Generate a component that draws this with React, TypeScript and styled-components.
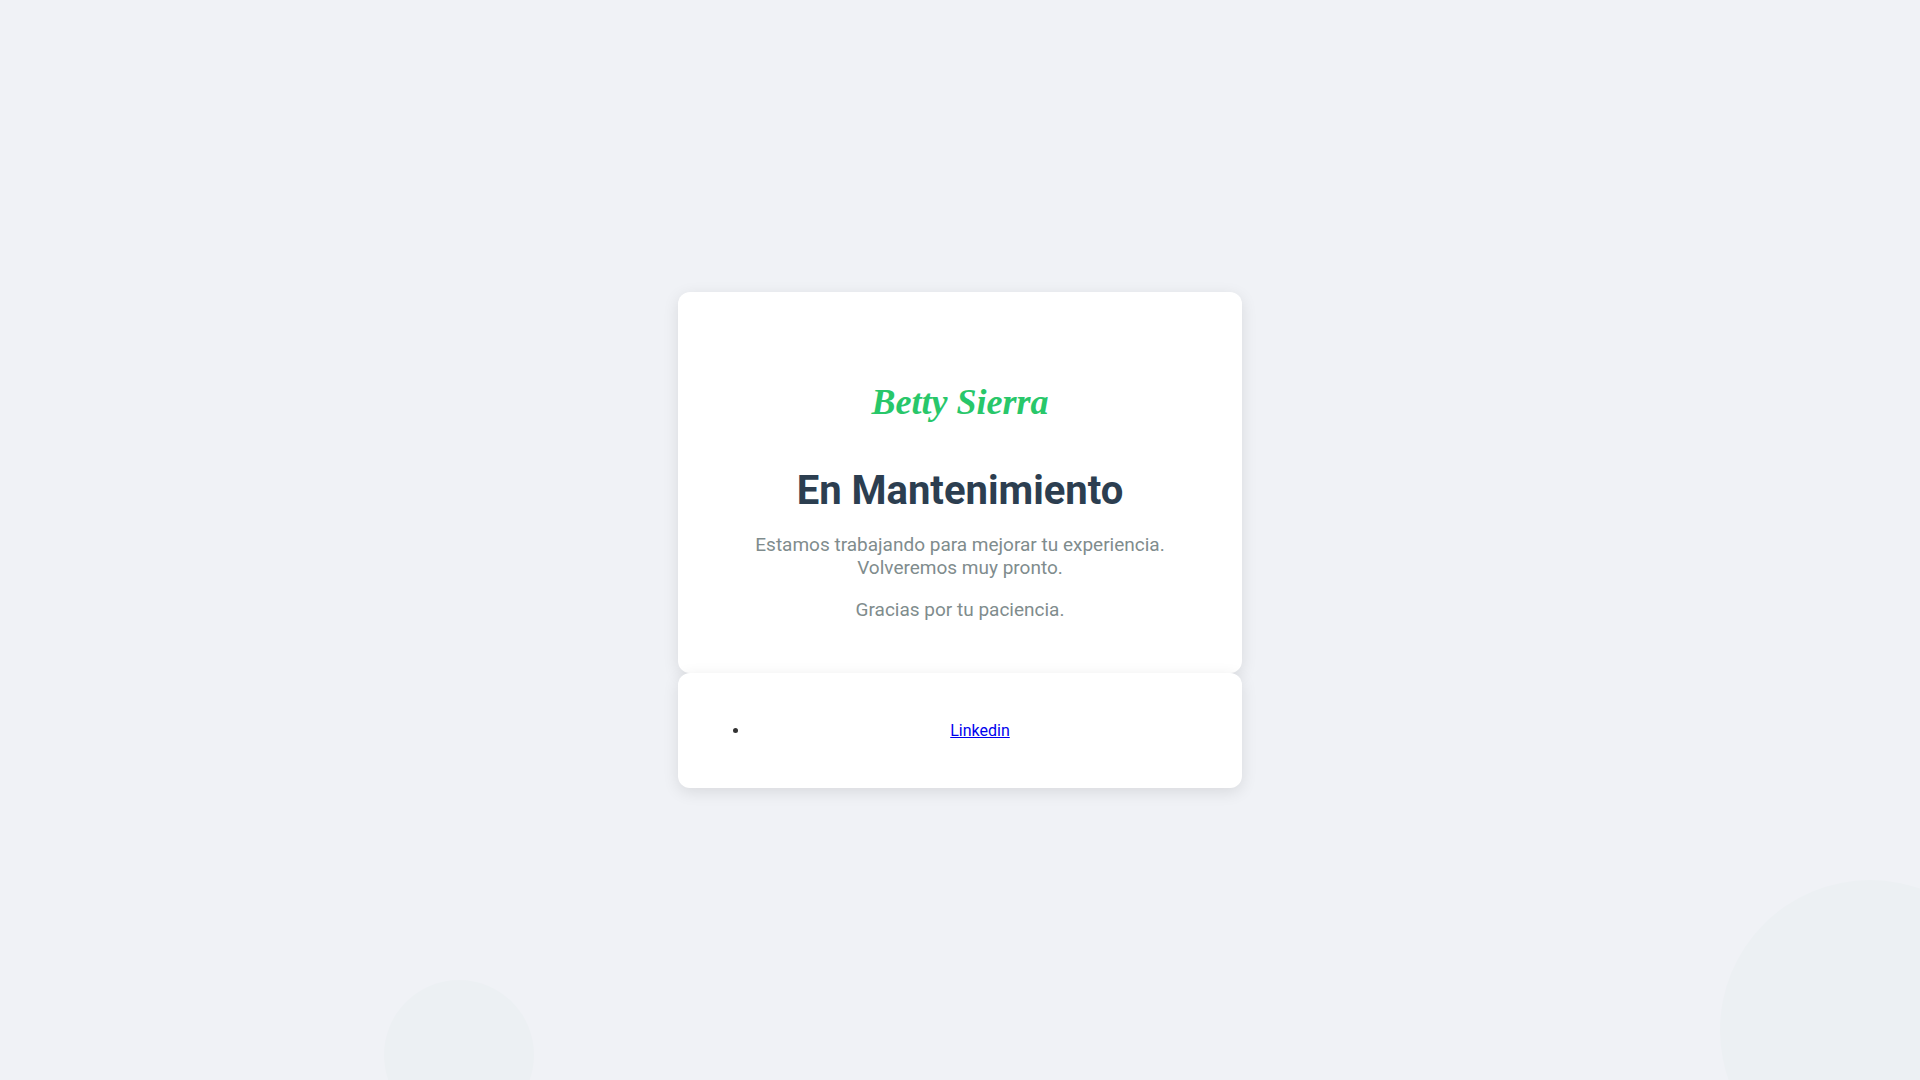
import React from 'react';
import styled, { createGlobalStyle } from 'styled-components';

const GlobalStyle = createGlobalStyle`
  body {
    margin: 0;
    background: #f0f2f6;
    color: #333;
    font-family: Roboto, "Liberation Sans", sans-serif;
    font-size: 16px;
  }
`;

const Page = styled.main`
  position: relative;
  display: flex;
  flex-direction: column;
  align-items: center;
  justify-content: center;
  min-height: 100vh;
  overflow: hidden;
  text-align: center;
`;

const Circle = styled.div<{ $size: number }>`
  position: absolute;
  width: ${({ $size }) => $size}px;
  height: ${({ $size }) => $size}px;
  border-radius: 50%;
  background: #ecf0f3;
`;

const LargeCircle = styled(Circle)`
  right: -100px;
  bottom: -100px;
`;

const SmallCircle = styled(Circle)`
  left: 20%;
  bottom: -50px;
`;

const Card = styled.section`
  position: relative;
  box-sizing: border-box;
  width: 100%;
  max-width: 564px;
  padding: 32px;
  border-radius: 12px;
  background: #fff;
  box-shadow: 0 4px 16px rgba(0, 0, 0, 0.1);
`;

const Logo = styled.div`
  display: flex;
  align-items: center;
  justify-content: center;
  box-sizing: border-box;
  height: 143px;
  padding-top: 12px;
  color: #28c76a;
  font-family: "Liberation Serif", serif;
  font-size: 36px;
  font-style: italic;
  font-weight: 700;
  line-height: 48px;
`;

const Title = styled.h1`
  margin: 0 0 19px;
  color: #2c3e50;
  font-size: 40px;
  line-height: 47px;
`;

const Message = styled.p`
  margin: 0 0 19px;
  color: #7f8c8d;
  font-size: 19px;
  line-height: 23px;

  &:last-child {
    margin-bottom: 20px;
  }
`;

const Links = styled.ul`
  margin: 16px 0;
  padding-left: 40px;
  line-height: 19px;
`;

const Anchor = styled.a`
  color: #0000ee;
`;

export default function App() {
  return (
    <>
      <GlobalStyle />
      <Page>
        <LargeCircle $size={300} />
        <SmallCircle $size={150} />
        <Card>
          <Logo>Betty Sierra</Logo>
          <Title>En Mantenimiento</Title>
          <Message>
            Estamos trabajando para mejorar tu experiencia.
            <br />
            Volveremos muy pronto.
          </Message>
          <Message>Gracias por tu paciencia.</Message>
        </Card>
        <Card>
          <Links>
            <li>
              <Anchor href="https://www.linkedin.com">Linkedin</Anchor>
            </li>
          </Links>
        </Card>
      </Page>
    </>
  );
}
